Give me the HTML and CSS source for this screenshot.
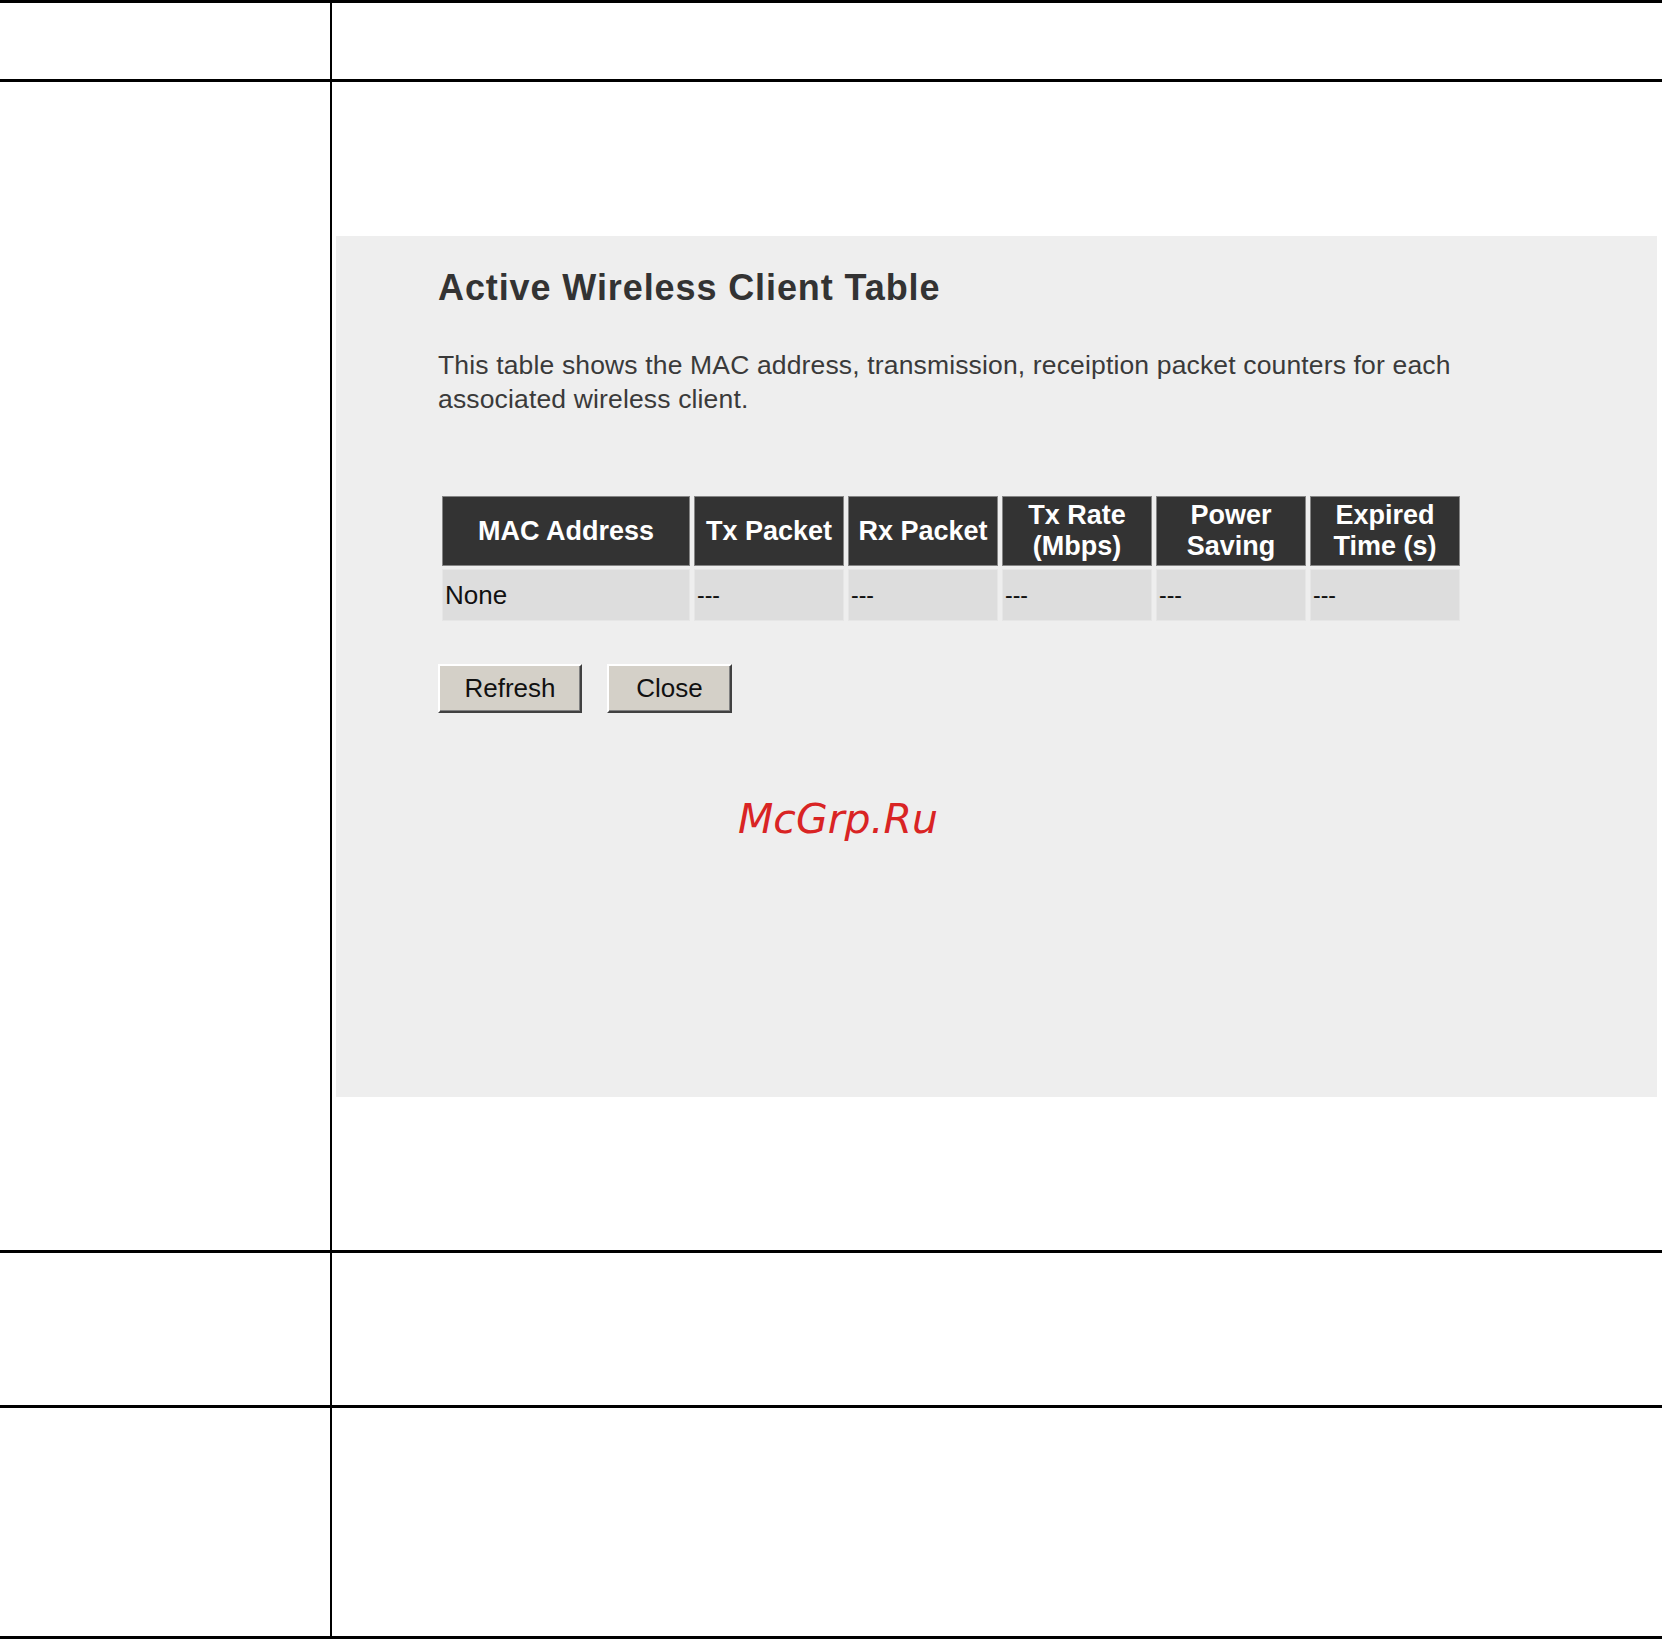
FILE: index.html
```html
<!DOCTYPE html>
<html lang="en">
<head>
    <meta charset="UTF-8">
    <meta name="viewport" content="width=device-width, initial-scale=1.0">
    <title>Active Wireless Client Table</title>
    <link rel="stylesheet" href="styles.css">
</head>
<body>
    <div class="sheet">
        <div class="row row-top">
            <div class="label"></div>
            <div class="cell"></div>
        </div>

        <div class="row row-shot">
            <div class="label"></div>
            <div class="cell">
                <!-- screenshot of the router page -->
                <div class="panel">
                    <h1 class="panel-title">Active Wireless Client Table</h1>
                    <p class="panel-text">This table shows the MAC address, transmission, receiption packet counters for each associated wireless client.</p>

                    <table class="client-table">
                        <tr>
                            <th class="col-mac">MAC Address</th>
                            <th>Tx Packet</th>
                            <th>Rx Packet</th>
                            <th>Tx Rate<br>(Mbps)</th>
                            <th>Power<br>Saving</th>
                            <th>Expired<br>Time (s)</th>
                        </tr>
                        <tr>
                            <td>None</td>
                            <td class="dash">---</td>
                            <td class="dash">---</td>
                            <td class="dash">---</td>
                            <td class="dash">---</td>
                            <td class="dash">---</td>
                        </tr>
                    </table>

                    <div class="buttons">
                        <button class="btn btn-refresh">Refresh</button>
                        <button class="btn btn-close">Close</button>
                    </div>

                    <div class="watermark">McGrp.Ru</div>
                </div>
            </div>
        </div>

        <div class="row row-third">
            <div class="label"></div>
            <div class="cell"></div>
        </div>

        <div class="row row-fourth">
            <div class="label"></div>
            <div class="cell"></div>
        </div>
    </div>
</body>
</html>
```

FILE: styles.css
```css
* {
    margin: 0;
    padding: 0;
    box-sizing: border-box;
    font-family: "Liberation Sans", Arial, sans-serif;
}
body {
    background-color: #ffffff;
    color: #333333;
    width: 1662px;
    overflow: hidden;
}
.sheet {
    border-top: 3px solid #000000;
}
.row {
    display: flex;
    border-bottom: 3px solid #000000;
}
.row-top { height: 79px; }
.row-shot { height: 1171px; }
.row-third { height: 155px; }
.row-fourth { height: 231px; }
.label {
    flex: none;
    width: 332px;
    border-right: 2px solid #000000;
}
.cell {
    flex: 1;
}
.row-shot .cell {
    padding: 154px 5px 0 4px;
}
.panel {
    position: relative;
    height: 861px;
    background-color: #eeeeee;
    padding: 32px 0 0 102px;
}
.panel-title {
    font-size: 36px;
    line-height: 40px;
    font-weight: bold;
    letter-spacing: 0.9px;
    color: #333333;
}
.panel-text {
    width: 1030px;
    margin-top: 40px;
    font-size: 26.5px;
    line-height: 34px;
    letter-spacing: 0.15px;
    color: #3a3a3a;
}
.client-table {
    margin-top: 77px;
    width: 1026px;
    table-layout: fixed;
    border-collapse: separate;
    border-spacing: 4px 3px;
}
.client-table th {
    width: 150px;
    height: 70px;
    background-color: #333333;
    border: 1px solid #858585;
    color: #ffffff;
    font-size: 27px;
    line-height: 31px;
    font-weight: bold;
    text-align: center;
    vertical-align: middle;
}
.client-table th.col-mac {
    width: 248px;
}
.client-table td {
    height: 52px;
    background-color: #dddddd;
    border: 1px solid #e6e6e6;
    padding: 0 2px;
    color: #111111;
    font-size: 26px;
    text-align: left;
    vertical-align: middle;
}
.client-table td.dash {
    font-size: 23px;
}
.buttons {
    display: flex;
    gap: 25px;
    margin-top: 40px;
}
.btn {
    height: 49px;
    background-color: #d4d0c8;
    border: 2px solid;
    border-color: #ffffff #404040 #404040 #ffffff;
    box-shadow: inset -1px -1px 0 #808080;
    color: #111111;
    font-size: 26px;
    cursor: pointer;
}
.btn-refresh { width: 144px; }
.btn-close { width: 125px; }
.watermark {
    position: absolute;
    left: 402px;
    top: 563px;
    font-family: "DejaVu Sans", sans-serif;
    font-style: italic;
    font-size: 41px;
    line-height: 1;
    color: #d92424;
}
```
